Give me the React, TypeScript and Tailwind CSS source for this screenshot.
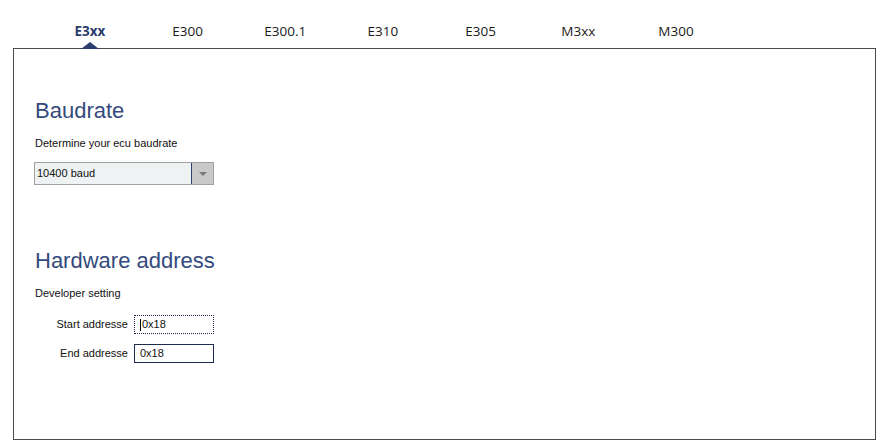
import React from 'react';

const tabs = ['E3xx', 'E300', 'E300.1', 'E310', 'E305', 'M3xx', 'M300'];

function AddressRow({ label, value, focused }: { label: string; value: string; focused?: boolean }) {
    return (
        <div className="flex items-center">
            <span className="w-[100px] text-right pr-[6px] text-[11px] leading-[13px] text-[#111]">{label}</span>
            <div
                className={
                    focused
                        ? 'w-[80px] h-[19px] border border-dotted border-[#1d2b50] flex items-center pl-[5px] text-[11px] text-[#111]'
                        : 'w-[80px] h-[19px] border border-[#1d2b50] flex items-center pl-[5px] text-[11px] text-[#111]'
                }
            >
                {focused && <span className="w-px h-[12px] bg-black mr-px" />}
                {value}
            </div>
        </div>
    );
}

export default function App() {
    return (
        <div className="w-[881px] h-[446px] bg-white font-['Liberation_Sans',Arial,sans-serif] overflow-hidden">
            {/* Model tabs */}
            <div className="flex pl-[41px] h-[48px] items-end">
                {tabs.map((tab, i) => (
                    <div key={tab} className="relative w-[97.7px] h-[48px] flex justify-center pt-[22px]">
                        <span
                            className={
                                i === 0
                                    ? "font-['Open_Sans',sans-serif] text-[13.5px] leading-[18px] font-bold text-[#2c3e6e]"
                                    : "font-['Open_Sans',sans-serif] text-[13.5px] leading-[18px] text-[#1a1a1a]"
                            }
                        >
                            {tab}
                        </span>
                        {i === 0 && (
                            <div className="absolute bottom-[-1px] left-1/2 -translate-x-1/2 w-0 h-0 border-l-[9px] border-r-[9px] border-b-[7px] border-l-transparent border-r-transparent border-b-[#2c3e6e]" />
                        )}
                    </div>
                ))}
            </div>

            {/* Settings panel */}
            <div className="ml-[13px] w-[863px] h-[392px] border border-[#4a4a4a] pl-[21px] pt-[49px]">
                <h2 className="text-[22px] leading-[26px] text-[#344a7c]">Baudrate</h2>
                <p className="mt-[13px] text-[11px] leading-[13px] text-[#111]">Determine your ecu baudrate</p>
                <div className="mt-[12px] -ml-px w-[180px] h-[23px] border border-[#a0a0a0] flex bg-[#eef2f2]">
                    <span className="flex-1 flex items-center pl-[2px] text-[11px] text-[#111] border-r border-[#2f3f6f]">10400 baud</span>
                    <span className="w-[21px] bg-[#c9c9c9] flex items-center justify-center">
                        <span className="w-0 h-0 border-l-[4px] border-r-[4px] border-t-[4px] border-l-transparent border-r-transparent border-t-[#7a7a7a]" />
                    </span>
                </div>

                <h2 className="mt-[63px] text-[22px] leading-[26px] text-[#344a7c]">Hardware address</h2>
                <p className="mt-[13px] text-[11px] leading-[13px] text-[#111]">Developer setting</p>
                <div className="mt-[15px] flex flex-col gap-[10px] -ml-px">
                    <AddressRow label="Start addresse" value="0x18" focused />
                    <AddressRow label="End addresse" value="0x18" />
                </div>
            </div>
        </div>
    );
}
